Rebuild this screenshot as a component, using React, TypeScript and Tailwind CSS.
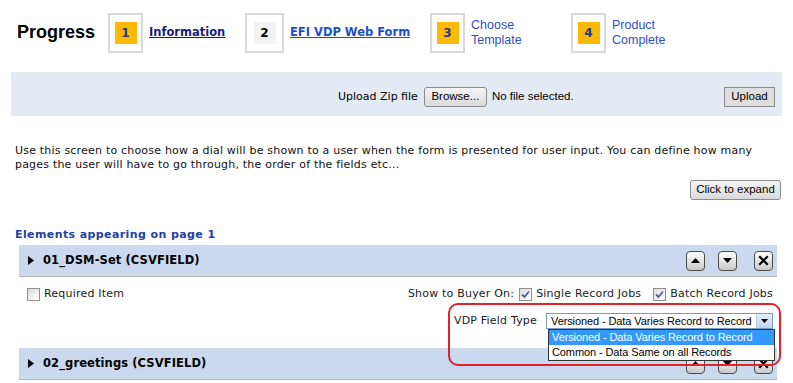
import React from 'react';

const Step: React.FC<{ n: string; active: boolean; width: string; box?: string; children: React.ReactNode }> = ({ n, active, width, box, children }) => (
  <div className={`flex items-center ${width}`}>
    <div className={`${box ?? 'w-[35px]'} h-[40px] border-2 border-[#d9d9d9] flex items-center justify-center shrink-0`}>
      <div
        className={
          active
            ? 'w-[22px] h-[22px] bg-[#ffb900] flex items-center justify-center text-[12px] font-bold text-[#1f3a93]'
            : 'w-[22px] h-[22px] bg-[#f2f2f2] flex items-center justify-center text-[12px] font-bold text-black'
        }
      >
        {n}
      </div>
    </div>
    <div className="ml-[6px]">{children}</div>
  </div>
);

const GrayButton: React.FC<{ children: React.ReactNode; className?: string }> = ({ children, className }) => (
  <div
    className={`h-[20px] flex items-center justify-center border border-[#8c8c8c] rounded-[3px] bg-gradient-to-b from-[#f6f6f6] to-[#d9d9d9] text-[11.5px] tracking-normal text-black font-['Liberation_Sans',sans-serif] ${className ?? ''}`}
  >
    {children}
  </div>
);

const IconButton: React.FC<{ kind: 'up' | 'down' | 'x' }> = ({ kind }) => (
  <div className="w-[19px] h-[20px] rounded-[4px] border border-[#4a4a4a] bg-gradient-to-b from-[#ffffff] to-[#c9c9c9] flex items-center justify-center">
    <svg width="11" height="11" viewBox="0 0 11 11">
      {kind === 'up' && <polygon points="1,8 10,8 5.5,3" fill="#000" />}
      {kind === 'down' && <polygon points="1,3 10,3 5.5,8" fill="#000" />}
      {kind === 'x' && (
        <path d="M2 2 L9 9 M9 2 L2 9" stroke="#000" strokeWidth="2.2" strokeLinecap="square" />
      )}
    </svg>
  </div>
);

const Check: React.FC<{ checked?: boolean }> = ({ checked }) => (
  <div className="w-[13px] h-[13px] border border-[#8f8f8f] bg-gradient-to-br from-[#dcdcdc] to-[#ffffff] flex items-center justify-center shrink-0">
    {checked && (
      <svg width="9" height="9" viewBox="0 0 9 9">
        <path d="M1 4.5 L3.5 7 L8 1.5" stroke="#4a5fa8" strokeWidth="1.8" fill="none" />
      </svg>
    )}
  </div>
);

const RowHeader: React.FC<{ title: string }> = ({ title }) => (
  <div className="h-[32px] bg-[#cbd9ee] border-b border-[#b5b5b5] flex items-center pl-[9px] pr-[4px]">
    <svg width="6" height="9" viewBox="0 0 6 9" className="mr-[9px]">
      <polygon points="0,0 6,4.5 0,9" fill="#000" />
    </svg>
    <span className="text-[11.5px] tracking-[0.1px] font-bold text-black">{title}</span>
    <div className="ml-auto flex items-center">
      <IconButton kind="up" />
      <div className="w-[13px]" />
      <IconButton kind="down" />
      <div className="w-[17px]" />
      <IconButton kind="x" />
    </div>
  </div>
);

const App: React.FC = () => {
  return (
    <div className="w-[793px] h-[383px] bg-white overflow-hidden relative font-['DejaVu_Sans',Verdana,sans-serif] text-[11px] tracking-[0.2px] text-[#1a1a1a]">
      {/* Progress header */}
      <div className="h-[72px] flex items-center pl-[17px] pb-[7px]">
        <span className="text-[18px] tracking-normal font-bold text-black w-[91px] font-['Liberation_Sans',sans-serif]">Progress</span>
        <Step n="1" active width="w-[137px]">
          <span className="text-[11.5px] tracking-normal font-bold text-[#1b1b78] underline">Information</span>
        </Step>
        <Step n="2" active={false} width="w-[185px]" box="w-[39px]">
          <span className="text-[11.5px] tracking-normal font-bold text-[#1c4fc4] underline">EFI VDP Web Form</span>
        </Step>
        <Step n="3" active width="w-[141px]">
          <div className="text-[12.5px] tracking-normal leading-[15px] text-[#2f4fbf] font-['Liberation_Sans',sans-serif]">
            Choose
            <br />
            Template
          </div>
        </Step>
        <Step n="4" active width="w-[141px]">
          <div className="text-[12.5px] tracking-normal leading-[15px] text-[#2f4fbf] font-['Liberation_Sans',sans-serif]">
            Product
            <br />
            Complete
          </div>
        </Step>
      </div>

      {/* Upload panel */}
      <div className="mx-[11px] h-[44px] bg-[#e3eaf4] flex items-center pl-[327px] pr-[7px] pt-[6px]">
        <span className="text-[11px] tracking-normal text-black">Upload Zip file</span>
        <GrayButton className="ml-[6px] w-[63px]">Browse...</GrayButton>
        <span className="ml-[5px] text-[11.5px] tracking-normal text-black font-['Liberation_Sans',sans-serif]">No file selected.</span>
        <GrayButton className="ml-auto w-[51px] rounded-none bg-none bg-[#dedede]">Upload</GrayButton>
      </div>

      {/* Description */}
      <div className="px-[15px] pt-[28px] leading-[14px] text-[11px] text-[#111]">
        Use this screen to choose how a dial will be shown to a user when the form is presented for user input. You can define how many pages the user will have to go through, the order of the fields etc...
      </div>
      <div className="flex justify-end pr-[12px] mt-[8px]">
        <GrayButton className="w-[91px] rounded-[1px]">Click to expand</GrayButton>
      </div>

      <div className="px-[15px] mt-[28px] text-[11px] tracking-[0.4px] font-bold text-[#2340a4] leading-[14px]">
        Elements appearing on page 1
      </div>

      <div className="mx-[19px] w-[758px] mt-[3px]">
        <RowHeader title="01_DSM-Set (CSVFIELD)" />
        <div className="h-[71px] pl-[8px] pr-[4px] pt-[9px]">
          <div className="flex items-center">
            <Check />
            <span className="ml-[4px]">Required Item</span>
            <span className="ml-auto">Show to Buyer On:</span>
            <div className="ml-[5px]">
              <Check checked />
            </div>
            <span className="ml-[4px]">Single Record Jobs</span>
            <div className="ml-[12px]">
              <Check checked />
            </div>
            <span className="ml-[4px]">Batch Record Jobs</span>
          </div>
          <div className="flex items-center justify-end mt-[10px]">
            <span>VDP Field Type</span>
            <div className="ml-[9px] w-[227px] h-[16px] border border-[#7f9db9] bg-white flex items-center font-['Liberation_Sans',sans-serif] text-[11px] tracking-[-0.1px] text-black">
              <span className="pl-[4px] whitespace-nowrap">Versioned - Data Varies Record to Record</span>
              <div className="ml-auto w-[16px] h-[14px] bg-gradient-to-b from-[#e6eefc] to-[#c3d3f0] border-l border-[#b9c8e6] flex items-center justify-center">
                <svg width="7" height="4" viewBox="0 0 7 4">
                  <polygon points="0,0 7,0 3.5,4" fill="#000" />
                </svg>
              </div>
            </div>
          </div>
        </div>
        <RowHeader title="02_greetings (CSVFIELD)" />
      </div>

      {/* Open dropdown list */}
      <div className="absolute left-[548px] top-[329px] w-[227px] border border-[#333] bg-white font-['Liberation_Sans',sans-serif] text-[11px] tracking-[-0.1px] text-black">
        <div className="h-[15px] leading-[15px] bg-[#3399ff] text-white pl-[3px] whitespace-nowrap">Versioned - Data Varies Record to Record</div>
        <div className="h-[15px] leading-[15px] pl-[3px] whitespace-nowrap">Common - Data Same on all Records</div>
      </div>

      {/* Highlight ring */}
      <div className="absolute left-[448px] top-[303px] w-[333px] h-[63px] border-2 border-[#e0232b] rounded-[10px] pointer-events-none" />
    </div>
  );
};

export default App;
